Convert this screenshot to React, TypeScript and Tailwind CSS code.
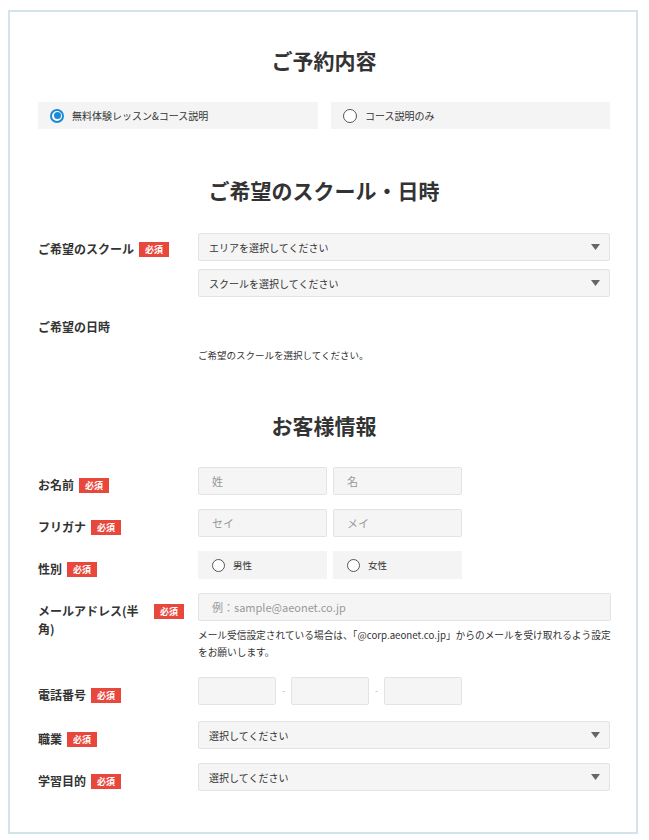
import React from "react";

function Badge() {
  return (
    <span className="flex h-[15px] w-[30px] shrink-0 items-center justify-center bg-[#e8473b] text-[9px] font-bold leading-none text-white">
      必須
    </span>
  );
}

function Label({ text, required = true, pt = "pt-[9px]" }: { text: string; required?: boolean; pt?: string }) {
  return (
    <div className={`flex items-start gap-[5px] ${pt}`}>
      <span className="text-[12px] font-bold leading-[18px] text-[#333]">{text}</span>
      {required && (
        <div className="shrink-0 pt-[2px]">
          <Badge />
        </div>
      )}
    </div>
  );
}

function Row({ label, children }: { label: React.ReactNode; children: React.ReactNode }) {
  return (
    <div className="grid grid-cols-[146px_1fr] gap-[14px]">
      <div>{label}</div>
      <div>{children}</div>
    </div>
  );
}

function Radio({ checked, size = 14 }: { checked?: boolean; size?: number }) {
  if (checked) {
    return (
      <span
        className="flex shrink-0 items-center justify-center rounded-full border-[2px] border-[#1a8ad4] bg-white"
        style={{ width: size, height: size }}
      >
        <span className="h-[7px] w-[7px] rounded-full bg-[#1a8ad4]" />
      </span>
    );
  }
  return (
    <span
      className="shrink-0 rounded-full border-[1.5px] border-[#555] bg-white"
      style={{ width: size, height: size }}
    />
  );
}

function Select({ text }: { text: string }) {
  return (
    <div className="flex h-[28px] items-center justify-between rounded-[2px] border border-[#e3e3e3] bg-[#f5f5f5] pl-[10px] pr-[9px]">
      <span className="text-[10px] text-[#333]">{text}</span>
      <svg width="9" height="6" viewBox="0 0 9 6">
        <path d="M0 0 H9 L4.5 6 Z" fill="#666" />
      </svg>
    </div>
  );
}

function TextInput({ placeholder, className = "" }: { placeholder?: string; className?: string }) {
  return (
    <input
      placeholder={placeholder}
      className={`block h-[28px] rounded-[2px] border border-[#e3e3e3] bg-[#f5f5f5] px-[13px] text-[11px] text-[#333] outline-none placeholder:text-[#999] ${className}`}
    />
  );
}

function Title({ children, className = "" }: { children: React.ReactNode; className?: string }) {
  return (
    <h2 className={`text-center text-[21px] font-bold leading-[24px] text-[#333] ${className}`}>{children}</h2>
  );
}

export default function App() {
  return (
    <div className="min-h-[840px] bg-white pl-[8px] pt-[10px] font-['Noto_Sans_CJK_JP','Noto_Sans',sans-serif]">
      <div className="w-[630px] border-2 border-[#d3e5eb] pb-[41px] pl-[28px] pr-[26px] pt-[36px]">
        <Title>ご予約内容</Title>
        <div className="mt-[30px] grid grid-cols-[280px_1fr] gap-[13px]">
          <div className="flex h-[27px] items-center gap-[8px] bg-[#f4f4f4] pl-[12px]">
            <Radio checked />
            <span className="text-[10px] text-[#333]">無料体験レッスン&amp;コース説明</span>
          </div>
          <div className="flex h-[27px] items-center gap-[8px] bg-[#f4f4f4] pl-[12px]">
            <Radio />
            <span className="text-[10px] text-[#333]">コース説明のみ</span>
          </div>
        </div>

        <Title className="mt-[49px]">ご希望のスクール・日時</Title>
        <div className="mt-[31px]">
          <Row label={<Label text="ご希望のスクール" pt="pt-[7px]" />}>
            <div className="flex flex-col gap-[8px]">
              <Select text="エリアを選択してください" />
              <Select text="スクールを選択してください" />
            </div>
          </Row>
        </div>
        <div className="mt-[14px]">
          <Row label={<Label text="ご希望の日時" required={false} pt="pt-[7px]" />}>
            <p className="pt-[36px] text-[9.5px] leading-[16px] text-[#333]">ご希望のスクールを選択してください。</p>
          </Row>
        </div>

        <Title className="mt-[50px]">お客様情報</Title>
        <div className="mt-[30px] flex flex-col gap-[14px]">
          <Row label={<Label text="お名前" />}>
            <div className="flex gap-[6px]">
              <TextInput placeholder="姓" className="w-[129px]" />
              <TextInput placeholder="名" className="w-[129px]" />
            </div>
          </Row>
          <Row label={<Label text="フリガナ" />}>
            <div className="flex gap-[6px]">
              <TextInput placeholder="セイ" className="w-[129px]" />
              <TextInput placeholder="メイ" className="w-[129px]" />
            </div>
          </Row>
          <Row label={<Label text="性別" />}>
            <div className="flex gap-[6px]">
              <div className="flex h-[28px] w-[129px] items-center gap-[8px] bg-[#f4f4f4] pl-[14px]">
                <Radio size={13} />
                <span className="text-[9.5px] text-[#333]">男性</span>
              </div>
              <div className="flex h-[28px] w-[129px] items-center gap-[8px] bg-[#f4f4f4] pl-[14px]">
                <Radio size={13} />
                <span className="text-[9.5px] text-[#333]">女性</span>
              </div>
            </div>
          </Row>
          <Row label={<Label text="メールアドレス(半角)" />}>
            <TextInput placeholder="例：sample@aeonet.co.jp" className="w-full" />
            <p className="mt-[6px] text-[9.7px] leading-[17px] text-[#333]">
              <span className="whitespace-nowrap">メール受信設定されている場合は、「@corp.aeonet.co.jp」からのメールを受け取れるよう設定</span>
              <br />
              をお願いします。
            </p>
          </Row>
          <div className="mt-[2px]">
            <Row label={<Label text="電話番号" />}>
              <div className="flex items-center">
                <TextInput className="w-[78px]" />
                <span className="w-[15px] text-center text-[9px] text-[#bbb]">-</span>
                <TextInput className="w-[78px]" />
                <span className="w-[15px] text-center text-[9px] text-[#bbb]">-</span>
                <TextInput className="w-[78px]" />
              </div>
            </Row>
          </div>
          <div className="mt-[2px]">
            <Row label={<Label text="職業" />}>
              <Select text="選択してください" />
            </Row>
          </div>
          <Row label={<Label text="学習目的" />}>
            <Select text="選択してください" />
          </Row>
        </div>
      </div>
    </div>
  );
}
